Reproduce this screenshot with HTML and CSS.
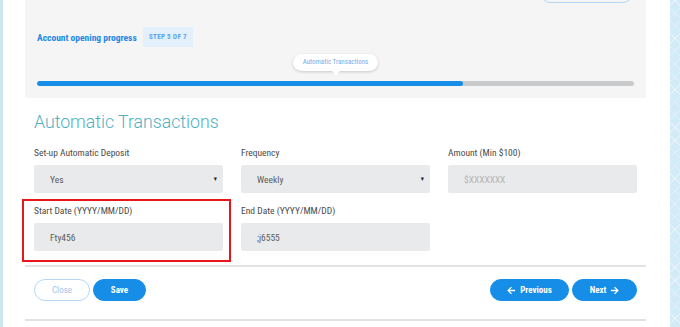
FILE: index.html
```html
<!DOCTYPE html>
<html lang="en">
<head>
<meta charset="UTF-8">
<meta name="viewport" content="width=device-width, initial-scale=1.0">
<title>Account opening - Automatic Transactions</title>
<link rel="stylesheet" href="styles.css">
</head>
<body>
<div class="frame">
    <div class="strip-left"></div>
    <div class="main">
        <div class="progress-panel">
            <div class="top-row">
                <span class="outline-btn"></span>
            </div>
            <div class="step-row">
                <span class="step-title">Account opening progress</span>
                <span class="step-badge">STEP 5 OF 7</span>
            </div>
            <div class="tip-row">
                <span class="tip">Automatic Transactions</span>
            </div>
            <div class="bar">
                <div class="bar-fill" style="width: 71.43%"></div>
            </div>
        </div>

        <form class="form" id="autoForm">
            <h2>Automatic Transactions</h2>
            <div class="grid">
                <div class="field">
                    <label for="deposit">Set-up Automatic Deposit</label>
                    <div class="select">
                        <span>Yes</span>
                        <span class="caret">&#9662;</span>
                    </div>
                </div>
                <div class="field">
                    <label for="frequency">Frequency</label>
                    <div class="select">
                        <span>Weekly</span>
                        <span class="caret">&#9662;</span>
                    </div>
                </div>
                <div class="field">
                    <label for="amount">Amount (Min $100)</label>
                    <input type="text" id="amount" placeholder="$XXXXXXX">
                </div>
                <div class="field flagged">
                    <label for="startDate">Start Date (YYYY/MM/DD)</label>
                    <input type="text" id="startDate" value="Fty456">
                </div>
                <div class="field">
                    <label for="endDate">End Date (YYYY/MM/DD)</label>
                    <input type="text" id="endDate" value=";j6555">
                </div>
            </div>
        </form>

        <div class="actions">
            <div class="btn-group">
                <button type="button" class="btn btn-outline">Close</button>
                <button type="button" class="btn">Save</button>
            </div>
            <div class="btn-group">
                <button type="button" class="btn btn-wide">
                    <svg width="9" height="9" viewBox="0 0 10 10"><path d="M9 5H1.5M5 1.2L1.2 5 5 8.8" fill="none" stroke="#fff" stroke-width="1.4"/></svg>
                    Previous
                </button>
                <button type="button" class="btn btn-next">
                    Next
                    <svg width="9" height="9" viewBox="0 0 10 10"><path d="M1 5h7.5M5 1.2L8.8 5 5 8.8" fill="none" stroke="#fff" stroke-width="1.4"/></svg>
                </button>
            </div>
        </div>
    </div>
    <div class="strip-right"></div>
</div>
</body>
</html>
```

FILE: styles.css
```css
body {
    margin: 0;
    padding: 0;
    background-color: #fff;
    font-family: "Roboto Condensed", "Liberation Sans Narrow", "DejaVu Sans Condensed", Roboto, sans-serif;
    overflow: hidden;
}
.frame {
    display: flex;
    height: 327px;
}
.strip-left {
    width: 3px;
    background-color: #cde7ef;
}
.strip-right {
    width: 10px;
    background-color: #d3eaf7;
    background-image:
        repeating-linear-gradient(45deg, rgba(255, 255, 255, 0.35) 0 1px, transparent 1px 9px),
        repeating-linear-gradient(-45deg, rgba(255, 255, 255, 0.35) 0 1px, transparent 1px 9px);
}
.main {
    flex: 1;
    padding: 0 24px 0 22px;
}

/* progress panel */
.progress-panel {
    height: 98px;
    box-sizing: border-box;
    background-color: #f5f5f5;
    padding: 0 12px;
    overflow: hidden;
}
.top-row {
    display: flex;
    justify-content: flex-end;
    height: 20px;
    margin-top: -17px;
}
.outline-btn {
    width: 91px;
    height: 18px;
    margin-right: 1px;
    border: 1px solid #b7d6f6;
    border-radius: 10px;
}
.step-row {
    display: flex;
    align-items: center;
    margin-top: 24px;
}
.step-title {
    font-size: 9.5px;
    font-weight: bold;
    color: #1e88e5;
    width: 106px;
}
.step-badge {
    display: inline-block;
    height: 20px;
    line-height: 20px;
    padding: 0 6px;
    font-size: 7px;
    font-weight: bold;
    color: #5aa2ea;
    background-color: #e3f0fc;
    letter-spacing: 0.3px;
}
.tip-row {
    display: flex;
    justify-content: center;
    margin-top: 7px;
}
.tip {
    position: relative;
    display: inline-block;
    height: 17px;
    line-height: 17px;
    padding: 0 10px;
    font-size: 7px;
    color: #73aee9;
    background-color: #fff;
    border-radius: 9px;
    box-shadow: 0 1px 3px rgba(0, 0, 0, 0.18);
}
.tip::after {
    content: "";
    position: absolute;
    left: 50%;
    bottom: -4px;
    margin-left: -4px;
    border-left: 4px solid transparent;
    border-right: 4px solid transparent;
    border-top: 4px solid #fff;
}
.bar {
    height: 5px;
    margin-top: 10px;
    background-color: #c9cacc;
    border-radius: 3px;
    overflow: hidden;
}
.bar-fill {
    height: 100%;
    background-color: #168ee8;
    border-radius: 3px;
}

/* form */
.form {
    padding: 0 9px;
}
h2 {
    margin: 12px 0 0;
    font-family: Roboto, sans-serif;
    font-weight: 300;
    font-size: 17.7px;
    line-height: 24px;
    color: #4fb0c2;
}
.grid {
    display: grid;
    grid-template-columns: repeat(3, 189px);
    column-gap: 18px;
    row-gap: 11px;
    margin-top: 12px;
}
.field label {
    display: block;
    font-size: 9.5px;
    line-height: 14px;
    color: #4a4a4a;
    margin-bottom: 5px;
}
.select,
.field input {
    display: flex;
    align-items: center;
    justify-content: space-between;
    width: 100%;
    height: 28px;
    box-sizing: border-box;
    padding: 0 6px 0 16px;
    background-color: #e9eaeb;
    border: none;
    border-radius: 2px;
    font-family: inherit;
    font-size: 9.5px;
    color: #5c5c5c;
}
.field input::placeholder {
    color: #b3b3b3;
}
.caret {
    font-size: 7px;
    color: #222;
}
.flagged {
    position: relative;
}
.flagged::after {
    content: "";
    position: absolute;
    top: -5px;
    left: -12px;
    right: -8px;
    bottom: -11px;
    border: 2px solid #e8161b;
}

/* footer buttons */
.actions {
    display: flex;
    justify-content: space-between;
    margin-top: 14px;
    padding: 12px 9px 18px;
    border-top: 2px solid #e2e2e2;
    border-bottom: 2px solid #e2e2e2;
}
.btn-group {
    display: flex;
    gap: 3px;
}
.btn {
    display: flex;
    align-items: center;
    justify-content: center;
    gap: 4px;
    width: 53px;
    height: 22px;
    padding: 0;
    border: 1px solid #168ee8;
    border-radius: 11px;
    background-color: #168ee8;
    color: #fff;
    font-family: inherit;
    font-size: 9px;
    font-weight: bold;
}
.btn-outline {
    width: 56px;
    background-color: #fff;
    border-color: #b7d6f6;
    color: #a6c3e6;
    font-weight: normal;
}
.btn-wide {
    width: 79px;
}
.btn-next {
    width: 65px;
}
```
